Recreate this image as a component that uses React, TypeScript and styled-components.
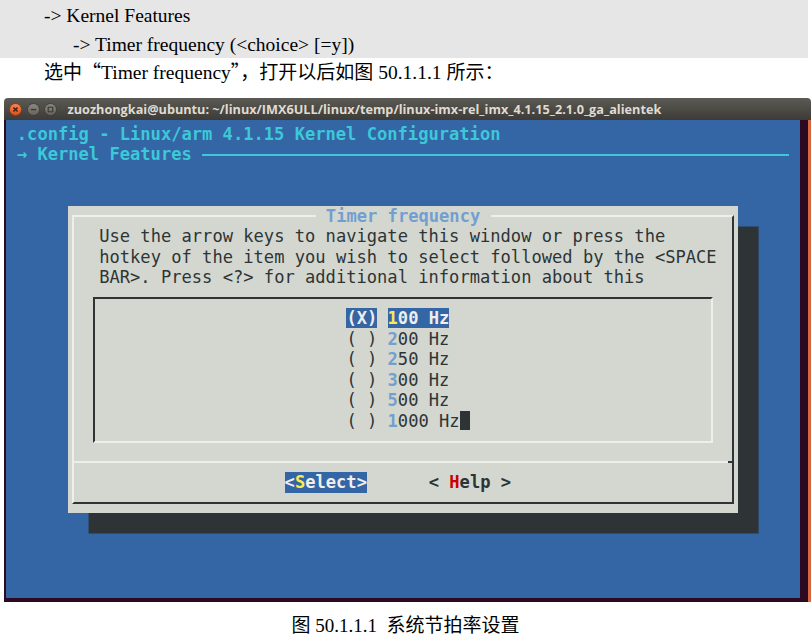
import React from "react";
import styled, { createGlobalStyle } from "styled-components";

// terminal cell metrics (the shot is a scaled 80x24 xterm)
const CW = 10.3;
const RH = 20.5;

const LIGHT = "#eeeeec";
const DARK = "#2e3436";
const BLUE = "#3465a4";
const LBLUE = "#729fcf";
const CYAN = "#3cc8d8";

const GlobalStyle = createGlobalStyle`
  html, body {
    margin: 0;
    padding: 0;
    background: #fff;
  }
  body {
    width: 811px;
    height: 637px;
    overflow: hidden;
  }
`;

const Page = styled.div`
  width: 811px;
  height: 637px;
  font-family: "Liberation Serif", "Noto Sans CJK SC", serif;
  color: #000;
`;

const Excerpt = styled.div`
  width: 808px;
  height: 58px;
  padding-top: 1px;
  box-sizing: border-box;
  background: #e7e6e6;
`;

const DocLine = styled.div<{ $indent: number }>`
  height: 29px;
  padding-left: ${(p) => p.$indent}px;
  font-size: 19.5px;
  line-height: 29px;
  white-space: pre;
  overflow: hidden;
`;

const Cjk = styled.span`
  font-family: "Noto Sans CJK SC", sans-serif;
  font-size: 19px;
  line-height: 1;
`;

const Window = styled.div`
  margin: 11px 0 0 4px;
  width: 807px;
`;

const TitleBar = styled.div`
  height: 22px;
  display: flex;
  align-items: center;
  gap: 4.5px;
  padding-left: 5px;
  background: linear-gradient(#5c5a54, #3c3b37);
  border-radius: 4px 4px 0 0;
`;

const TitleText = styled.span`
  margin-left: 6px;
  font-family: "Open Sans", "DejaVu Sans", sans-serif;
  font-weight: bold;
  font-size: 12.7px;
  color: #dfdbd2;
  white-space: pre;
`;

const TermBody = styled.div`
  background: #2c0a22;
  padding: 0 8px 4px 2px;
  border-right: 3px solid #d9673f;
`;

const Screen = styled.div`
  height: 478px;
  box-sizing: border-box;
  padding: 3.75px 0 0 0.5px;
  background: ${BLUE};
  font-family: "DejaVu Sans Mono", monospace;
  font-size: 17.1px;
  line-height: ${RH}px;
`;

const Row = styled.div`
  height: ${RH}px;
  white-space: pre;
`;

const BackTitle = styled(Row)`
  padding-left: ${CW}px;
  color: ${CYAN};
  font-weight: bold;
`;

const SubTitle = styled(Row)`
  display: flex;
  align-items: center;
  padding-left: ${CW}px;
  color: ${CYAN};
  font-weight: bold;
`;

const Rule = styled.div`
  flex: 1;
  height: 2px;
  margin-right: 10.7px;
  background: ${CYAN};
`;

const DialogWrap = styled.div`
  margin: ${2 * RH}px 0 0 ${6 * CW}px;
`;

const Dialog = styled.div`
  width: ${65 * CW}px;
  height: ${15 * RH}px;
  background: #d3d7cf;
  box-shadow: ${2 * CW}px ${RH}px 0 ${DARK};
  color: ${DARK};
`;

const Frame = styled.fieldset`
  margin: 0 ${CW / 2 - 1}px;
  padding: 0 0 9.25px;
  min-width: 0;
  border: 2px solid;
  border-color: ${LIGHT} ${DARK} ${DARK} ${LIGHT};
`;

const Legend = styled.legend`
  margin: 0 auto;
  padding: 0 ${CW}px;
  height: ${RH}px;
  line-height: ${RH}px;
  font-weight: bold;
  color: ${LBLUE};
  white-space: pre;
`;

const Prompt = styled.div`
  margin-left: ${3 * CW - CW / 2 - 1}px;
  white-space: pre;
`;

const ListBox = styled.div`
  margin: 9.25px 0 0 ${2 * CW - 2}px;
  width: ${60 * CW + 2}px;
  height: ${7 * RH + 2}px;
  box-sizing: border-box;
  padding: 9.25px 0 0 ${27 * CW - (2 * CW + CW / 2 + 1)}px;
  border: 2px solid;
  border-color: ${DARK} ${LIGHT} ${LIGHT} ${DARK};
`;

const Cell = styled.span<{ $sel?: boolean }>`
  background: ${(p) => (p.$sel ? BLUE : "transparent")};
  color: ${(p) => (p.$sel ? LIGHT : DARK)};
  font-weight: ${(p) => (p.$sel ? "bold" : "normal")};
`;

const Hot = styled.span<{ $sel?: boolean }>`
  font-weight: bold;
  color: ${(p) => (p.$sel ? "#fce94f" : LBLUE)};
`;

const Cursor = styled.span`
  display: inline-block;
  width: ${CW}px;
  height: ${RH - 1}px;
  vertical-align: top;
  background: ${DARK};
`;

const Separator = styled.div`
  display: flex;
  height: 2px;
  margin-top: 18.5px;
`;

const SepLine = styled.div<{ $dark?: boolean }>`
  flex: ${(p) => (p.$dark ? `0 0 ${CW / 2 - 1}px` : "1")};
  background: ${(p) => (p.$dark ? DARK : LIGHT)};
`;

const Buttons = styled.div`
  display: flex;
  gap: ${6 * CW}px;
  height: ${RH}px;
  margin-top: 9.25px;
  padding-left: ${21 * CW - CW / 2 - 1}px;
  white-space: pre;
`;

const Button = styled.span<{ $active?: boolean }>`
  font-weight: bold;
  background: ${(p) => (p.$active ? BLUE : "transparent")};
  color: ${(p) => (p.$active ? LIGHT : DARK)};
`;

const Key = styled.span<{ $active?: boolean }>`
  color: ${(p) => (p.$active ? "#fce94f" : "#cc0000")};
`;

const Caption = styled.div`
  margin-top: 12px;
  height: 22px;
  text-align: center;
  font-size: 19px;
  line-height: 22px;
  white-space: pre;
`;

const WinButton = ({ kind }: { kind: "close" | "min" | "max" }) => {
  const close = kind === "close";
  return (
    <svg width="13" height="13" viewBox="0 0 13 13">
      <defs>
        <linearGradient id={`g-${kind}`} x1="0" y1="0" x2="0" y2="1">
          <stop offset="0" stopColor={close ? "#f48a5c" : "#8d8a83"} />
          <stop offset="1" stopColor={close ? "#dc4e1a" : "#65625b"} />
        </linearGradient>
      </defs>
      <circle cx="6.5" cy="6.5" r="6" fill={`url(#g-${kind})`} stroke={close ? "#8a3412" : "#3a3935"} strokeWidth="0.8" />
      {close && <path d="M4.4 4.4 L8.6 8.6 M8.6 4.4 L4.4 8.6" stroke="#4a1a08" strokeWidth="1.4" />}
      {kind === "min" && <path d="M3.8 6.6 H9.2" stroke="#3a3935" strokeWidth="1.4" />}
      {kind === "max" && <rect x="4.2" y="4.2" width="4.6" height="4.6" fill="none" stroke="#3a3935" strokeWidth="1.1" />}
    </svg>
  );
};

const items = [
  { v: "100 Hz", sel: true },
  { v: "200 Hz" },
  { v: "250 Hz" },
  { v: "300 Hz" },
  { v: "500 Hz" },
  { v: "1000 Hz", cursor: true },
];

const App: React.FC = () => {
  return (
    <Page>
      <GlobalStyle />
      <Excerpt>
        <DocLine $indent={44}>{"-> Kernel Features"}</DocLine>
        <DocLine $indent={73}>{"-> Timer frequency (<choice> [=y])"}</DocLine>
      </Excerpt>
      <DocLine $indent={44}>
        <Cjk>选中“</Cjk>Timer frequency<Cjk>”，打开以后如图</Cjk> 50.1.1.1 <Cjk>所示：</Cjk>
      </DocLine>

      <Window>
        <TitleBar>
          <WinButton kind="close" />
          <WinButton kind="min" />
          <WinButton kind="max" />
          <TitleText>zuozhongkai@ubuntu: ~/linux/IMX6ULL/linux/temp/linux-imx-rel_imx_4.1.15_2.1.0_ga_alientek</TitleText>
        </TitleBar>
        <TermBody>
          <Screen>
            <BackTitle>.config - Linux/arm 4.1.15 Kernel Configuration</BackTitle>
            <SubTitle>
              {"→ Kernel Features "}
              <Rule />
            </SubTitle>
            <DialogWrap>
              <Dialog>
                <Frame>
                  <Legend>Timer frequency</Legend>
                  <Prompt>
                    {"Use the arrow keys to navigate this window or press the\n"}
                    {"hotkey of the item you wish to select followed by the <SPACE\n"}
                    {"BAR>. Press <?> for additional information about this"}
                  </Prompt>
                  <ListBox>
                    {items.map((it) => (
                      <Row key={it.v}>
                        <Cell $sel={it.sel}>{it.sel ? "(X)" : "( )"}</Cell>
                        {" "}
                        <Cell $sel={it.sel}>
                          <Hot $sel={it.sel}>{it.v[0]}</Hot>
                          {it.v.slice(1)}
                        </Cell>
                        {it.cursor && <Cursor />}
                      </Row>
                    ))}
                  </ListBox>
                  <Separator>
                    <SepLine />
                    <SepLine $dark />
                  </Separator>
                  <Buttons>
                    <Button $active>
                      {"<"}
                      <Key $active>S</Key>
                      {"elect>"}
                    </Button>
                    <Button>
                      {"< "}
                      <Key>H</Key>
                      {"elp >"}
                    </Button>
                  </Buttons>
                </Frame>
              </Dialog>
            </DialogWrap>
          </Screen>
        </TermBody>
      </Window>

      <Caption>
        <Cjk>图</Cjk>
        {" 50.1.1.1  "}
        <Cjk>系统节拍率设置</Cjk>
      </Caption>
    </Page>
  );
};

export default App;
